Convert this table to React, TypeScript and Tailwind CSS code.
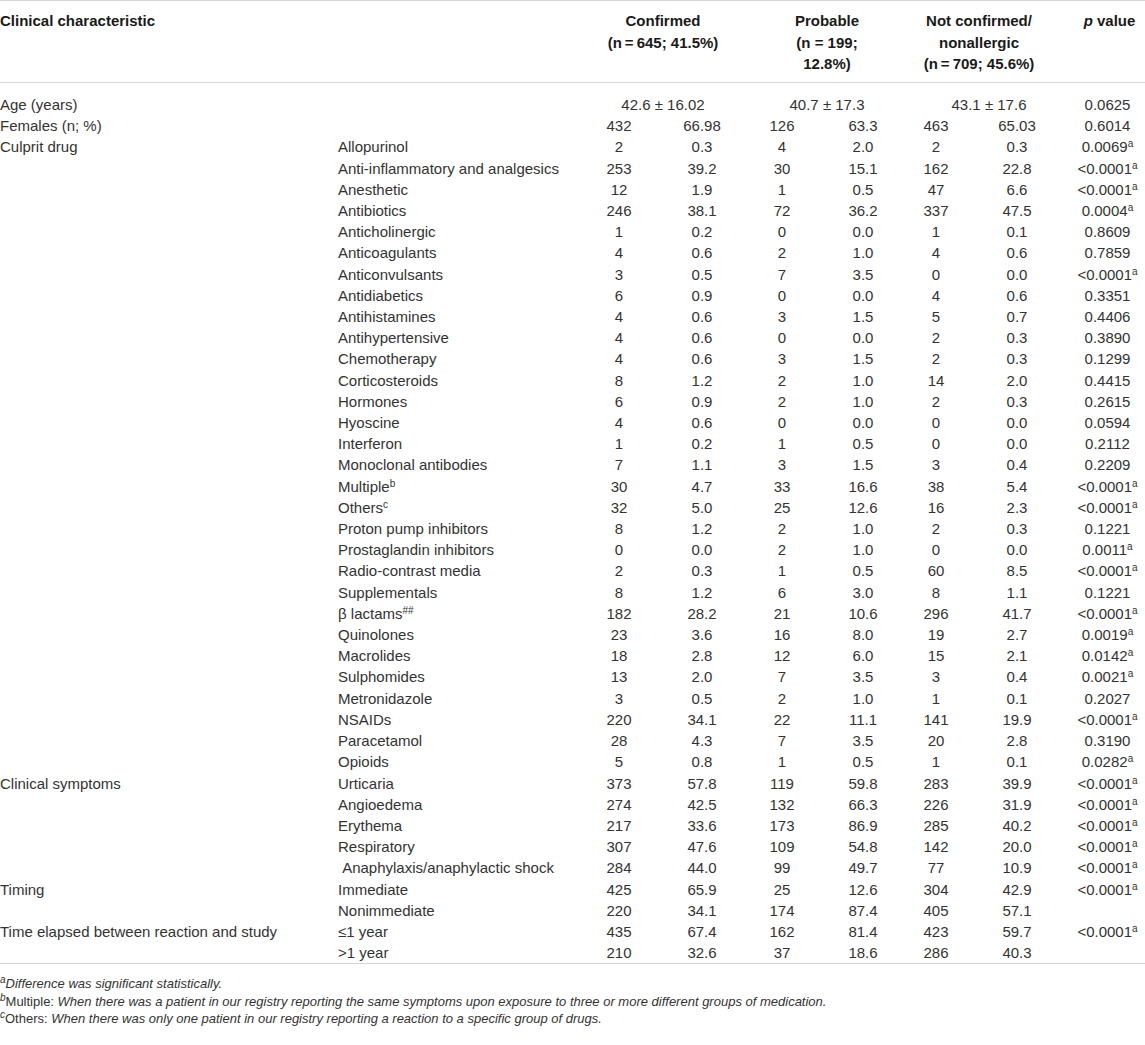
type Row = {
  group?: string;
  label: string;
  mark?: string;
  values: string[];
  p: string;
  sig?: boolean;
};

const culprit: [string, string[], string, boolean?, string?][] = [
  ["Allopurinol", ["2", "0.3", "4", "2.0", "2", "0.3"], "0.0069", true],
  ["Anti-inflammatory and analgesics", ["253", "39.2", "30", "15.1", "162", "22.8"], "<0.0001", true],
  ["Anesthetic", ["12", "1.9", "1", "0.5", "47", "6.6"], "<0.0001", true],
  ["Antibiotics", ["246", "38.1", "72", "36.2", "337", "47.5"], "0.0004", true],
  ["Anticholinergic", ["1", "0.2", "0", "0.0", "1", "0.1"], "0.8609"],
  ["Anticoagulants", ["4", "0.6", "2", "1.0", "4", "0.6"], "0.7859"],
  ["Anticonvulsants", ["3", "0.5", "7", "3.5", "0", "0.0"], "<0.0001", true],
  ["Antidiabetics", ["6", "0.9", "0", "0.0", "4", "0.6"], "0.3351"],
  ["Antihistamines", ["4", "0.6", "3", "1.5", "5", "0.7"], "0.4406"],
  ["Antihypertensive", ["4", "0.6", "0", "0.0", "2", "0.3"], "0.3890"],
  ["Chemotherapy", ["4", "0.6", "3", "1.5", "2", "0.3"], "0.1299"],
  ["Corticosteroids", ["8", "1.2", "2", "1.0", "14", "2.0"], "0.4415"],
  ["Hormones", ["6", "0.9", "2", "1.0", "2", "0.3"], "0.2615"],
  ["Hyoscine", ["4", "0.6", "0", "0.0", "0", "0.0"], "0.0594"],
  ["Interferon", ["1", "0.2", "1", "0.5", "0", "0.0"], "0.2112"],
  ["Monoclonal antibodies", ["7", "1.1", "3", "1.5", "3", "0.4"], "0.2209"],
  ["Multiple", ["30", "4.7", "33", "16.6", "38", "5.4"], "<0.0001", true, "b"],
  ["Others", ["32", "5.0", "25", "12.6", "16", "2.3"], "<0.0001", true, "c"],
  ["Proton pump inhibitors", ["8", "1.2", "2", "1.0", "2", "0.3"], "0.1221"],
  ["Prostaglandin inhibitors", ["0", "0.0", "2", "1.0", "0", "0.0"], "0.0011", true],
  ["Radio-contrast media", ["2", "0.3", "1", "0.5", "60", "8.5"], "<0.0001", true],
  ["Supplementals", ["8", "1.2", "6", "3.0", "8", "1.1"], "0.1221"],
  ["β lactams", ["182", "28.2", "21", "10.6", "296", "41.7"], "<0.0001", true, "##"],
  ["Quinolones", ["23", "3.6", "16", "8.0", "19", "2.7"], "0.0019", true],
  ["Macrolides", ["18", "2.8", "12", "6.0", "15", "2.1"], "0.0142", true],
  ["Sulphomides", ["13", "2.0", "7", "3.5", "3", "0.4"], "0.0021", true],
  ["Metronidazole", ["3", "0.5", "2", "1.0", "1", "0.1"], "0.2027"],
  ["NSAIDs", ["220", "34.1", "22", "11.1", "141", "19.9"], "<0.0001", true],
  ["Paracetamol", ["28", "4.3", "7", "3.5", "20", "2.8"], "0.3190"],
  ["Opioids", ["5", "0.8", "1", "0.5", "1", "0.1"], "0.0282", true],
];

const symptoms: [string, string[]][] = [
  ["Urticaria", ["373", "57.8", "119", "59.8", "283", "39.9"]],
  ["Angioedema", ["274", "42.5", "132", "66.3", "226", "31.9"]],
  ["Erythema", ["217", "33.6", "173", "86.9", "285", "40.2"]],
  ["Respiratory", ["307", "47.6", "109", "54.8", "142", "20.0"]],
  ["\u00a0Anaphylaxis/anaphylactic shock", ["284", "44.0", "99", "49.7", "77", "10.9"]],
];

const rows: Row[] = [
  ...culprit.map(([label, values, p, sig, mark], i) => ({
    group: i === 0 ? "Culprit drug" : undefined,
    label,
    values,
    p,
    sig: !!sig,
    mark,
  })),
  ...symptoms.map(([label, values], i) => ({
    group: i === 0 ? "Clinical symptoms" : undefined,
    label,
    values,
    p: "<0.0001",
    sig: true,
  })),
  {
    group: "Timing",
    label: "Immediate",
    values: ["425", "65.9", "25", "12.6", "304", "42.9"],
    p: "<0.0001",
    sig: true,
  },
  {
    label: "Nonimmediate",
    values: ["220", "34.1", "174", "87.4", "405", "57.1"],
    p: "",
  },
  {
    group: "Time elapsed between reaction and study",
    label: "≤1 year",
    values: ["435", "67.4", "162", "81.4", "423", "59.7"],
    p: "<0.0001",
    sig: true,
  },
  {
    label: ">1 year",
    values: ["210", "32.6", "37", "18.6", "286", "40.3"],
    p: "",
  },
];

function Sup({ children }: { children: string }) {
  return <sup className="text-[10px]">{children}</sup>;
}

export default function App() {
  return (
    <div className="w-[1145px] h-[1045px] bg-white font-['Liberation_Sans',Arial,sans-serif] text-[#333333] overflow-hidden">
      <table className="table-fixed w-[1145px] border-collapse text-[15px]">
        <colgroup>
          <col className="w-[338px]" />
          <col className="w-[242px]" />
          <col className="w-[78px]" />
          <col className="w-[88px]" />
          <col className="w-[72px]" />
          <col className="w-[90px]" />
          <col className="w-[56px]" />
          <col className="w-[106px]" />
          <col className="w-[75px]" />
        </colgroup>
        <thead>
          <tr className="border-t border-b border-[#d6d6d6] align-top font-bold text-[#1a1a1a] leading-[21.5px]">
            <th className="text-left pt-[9px] pb-[8px] h-[82px]">Clinical characteristic</th>
            <th></th>
            <th colSpan={2} className="text-center pt-[9px]">
              Confirmed
              <br />
              (n{"\u2009"}={"\u2009"}645; 41.5%)
            </th>
            <th colSpan={2} className="text-center pt-[9px]">
              Probable
              <br />
              (n = 199;
              <br />
              12.8%)
            </th>
            <th colSpan={2} className="text-center pt-[9px] pr-[20px]">
              Not confirmed/
              <br />
              nonallergic
              <br />
              (n{"\u2009"}={"\u2009"}709; 45.6%)
            </th>
            <th className="text-center pt-[9px] pl-[4px]">
              <i>p</i> value
            </th>
          </tr>
        </thead>
        <tbody className="leading-[21.2px]">
          <tr>
            <td className="pt-[11px]">Age (years)</td>
            <td className="pt-[11px]"></td>
            <td colSpan={2} className="text-center pt-[11px]">
              42.6 ± 16.02
            </td>
            <td colSpan={2} className="text-center pt-[11px]">
              40.7 ± 17.3
            </td>
            <td colSpan={2} className="text-center pt-[11px]">
              43.1 ± 17.6
            </td>
            <td className="text-center pt-[11px]">0.0625</td>
          </tr>
          <tr>
            <td>Females (n; %)</td>
            <td></td>
            {["432", "66.98", "126", "63.3", "463", "65.03"].map((v, i) => (
              <td key={i} className="text-center">
                {v}
              </td>
            ))}
            <td className="text-center">0.6014</td>
          </tr>
          {rows.map((row, r) => (
            <tr key={r}>
              <td className={r === rows.length - 1 ? "pb-[16px]" : ""}>{row.group}</td>
              <td className="whitespace-nowrap">
                {row.label}
                {row.mark && <Sup>{row.mark}</Sup>}
              </td>
              {row.values.map((v, i) => (
                <td key={i} className="text-center">
                  {v}
                </td>
              ))}
              <td className="text-center whitespace-nowrap">
                {row.p}
                {row.sig && <Sup>a</Sup>}
              </td>
            </tr>
          ))}
        </tbody>
      </table>
      <div className="border-t border-[#d6d6d6] pt-[11px] text-[13px] leading-[17.5px] italic">
        <p>
          <Sup>a</Sup>Difference was significant statistically.
        </p>
        <p>
          <Sup>b</Sup>
          <span className="not-italic">Multiple:</span> When there was a patient in our registry reporting the same symptoms upon exposure to three or more different groups of medication.
        </p>
        <p>
          <Sup>c</Sup>
          <span className="not-italic">Others:</span> When there was only one patient in our registry reporting a reaction to a specific group of drugs.
        </p>
      </div>
    </div>
  );
}
